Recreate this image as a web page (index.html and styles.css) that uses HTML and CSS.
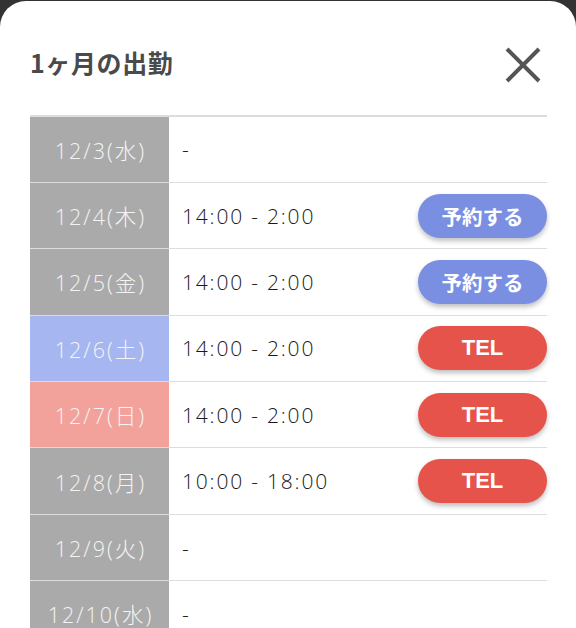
FILE: index.html
```html
<!DOCTYPE html>
<html lang="ja">
<head>
    <meta charset="UTF-8">
    <meta name="viewport" content="width=device-width, initial-scale=1.0">
    <title>1ヶ月の出勤</title>
    <link rel="stylesheet" href="styles.css">
</head>
<body>
    <div class="modal">
        <div class="modal-header">
            <h2 class="modal-title">1ヶ月の出勤</h2>
            <button class="close-btn" aria-label="閉じる">
                <svg width="38" height="38" viewBox="0 0 38 38">
                    <path d="M3 3 L35 35 M35 3 L3 35" stroke="#555" stroke-width="4" fill="none"/>
                </svg>
            </button>
        </div>
        <table class="schedule">
            <tr>
                <th class="day">12/3(水)</th>
                <td class="time">-</td>
                <td class="action"></td>
            </tr>
            <tr>
                <th class="day">12/4(木)</th>
                <td class="time">14:00 - 2:00</td>
                <td class="action"><button class="btn btn-reserve">予約する</button></td>
            </tr>
            <tr>
                <th class="day">12/5(金)</th>
                <td class="time">14:00 - 2:00</td>
                <td class="action"><button class="btn btn-reserve">予約する</button></td>
            </tr>
            <tr>
                <th class="day sat">12/6(土)</th>
                <td class="time">14:00 - 2:00</td>
                <td class="action"><button class="btn btn-tel">TEL</button></td>
            </tr>
            <tr>
                <th class="day sun">12/7(日)</th>
                <td class="time">14:00 - 2:00</td>
                <td class="action"><button class="btn btn-tel">TEL</button></td>
            </tr>
            <tr>
                <th class="day">12/8(月)</th>
                <td class="time">10:00 - 18:00</td>
                <td class="action"><button class="btn btn-tel">TEL</button></td>
            </tr>
            <tr>
                <th class="day">12/9(火)</th>
                <td class="time">-</td>
                <td class="action"></td>
            </tr>
            <tr>
                <th class="day">12/10(水)</th>
                <td class="time">-</td>
                <td class="action"></td>
            </tr>
        </table>
    </div>
</body>
</html>
```

FILE: styles.css
```css
body {
    margin: 0;
    padding: 0;
    background-color: #333;
    font-family: "Noto Sans CJK JP", "Noto Sans", sans-serif;
    overflow: hidden;
}

.modal {
    margin-top: 1px;
    background-color: #fff;
    border-radius: 26px 26px 0 0;
    padding: 0 29px 0 30px;
    height: 640px;
}

.modal-header {
    display: flex;
    justify-content: space-between;
    align-items: center;
    height: 100px;
    padding-top: 14px;
}

.modal-title {
    margin: 0 0 6px;
    font-size: 25px;
    font-weight: 700;
    color: #4a4a4a;
    letter-spacing: 0.6px;
}

.close-btn {
    background: none;
    border: none;
    padding: 0;
    margin-right: 5px;
    display: flex;
}

.schedule {
    width: 100%;
    border-collapse: collapse;
    border-top: 2px solid #ddd;
}

.schedule tr {
    height: 66.4px;
    border-bottom: 1.5px solid #ddd;
}

.day {
    width: 137px;
    padding: 0 0 0 2px;
    background-color: #aaa;
    color: #f4f4f4;
    font-family: "Open Sans", "Noto Sans CJK JP", sans-serif;
    font-size: 21.5px;
    font-weight: 300;
    letter-spacing: 2px;
    text-align: center;
}

.day.sat {
    background-color: #a6b6f1;
}

.day.sun {
    background-color: #f2a19b;
}

.time {
    padding: 0 0 0 13px;
    font-family: "Open Sans", "Noto Sans CJK JP", sans-serif;
    font-size: 21px;
    font-weight: 300;
    letter-spacing: 1.8px;
    color: #1a1a1a;
}

.action {
    text-align: right;
    padding: 0;
}

.btn {
    width: 129px;
    height: 44px;
    border: none;
    border-radius: 22px;
    color: #fff;
    font-family: "Roboto", "Noto Sans CJK JP", sans-serif;
    font-size: 20.5px;
    font-weight: 700;
    box-shadow: 0 3px 5px rgba(0, 0, 0, 0.25);
    vertical-align: middle;
}

.btn-reserve {
    background-color: #7a8ee2;
}

.btn-tel {
    background-color: #e5534b;
    font-family: "Liberation Sans", Arial, sans-serif;
    font-size: 22px;
}
```
